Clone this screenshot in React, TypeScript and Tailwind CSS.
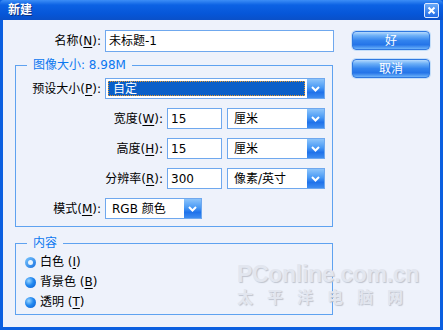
import type { ReactNode } from "react";

const FONT = "font-['DejaVu_Sans','Noto_Sans_CJK_SC',sans-serif]";

function Key({ children }: { children: ReactNode }) {
    return <span className="underline underline-offset-2">{children}</span>;
}

function Arrow() {
    return (
        <div className="flex h-full w-[17px] flex-none items-center justify-center bg-[linear-gradient(180deg,#8cc4fb_0%,#4a9af5_45%,#1f72ea_70%,#3f8df2_100%)]">
            <svg width="9" height="6" viewBox="0 0 9 6">
                <polyline points="1,1 4.5,4.5 8,1" fill="none" stroke="#fff" strokeWidth="2" />
            </svg>
        </div>
    );
}

function Select({ value, className, focused }: { value: string; className: string; focused?: boolean }) {
    return (
        <div className={`flex h-[21px] flex-none border border-[#6fa8ee] bg-white ${className}`}>
            <div className="flex min-w-0 flex-1 items-center p-[2px]">
                {focused ? (
                    <div className="flex h-full w-full items-center border border-dotted border-[#e89a2a] bg-[#0a5fc8] pl-[4px] text-white">
                        {value}
                    </div>
                ) : (
                    <span className="pl-[4px]">{value}</span>
                )}
            </div>
            <Arrow />
        </div>
    );
}

function Input({ value, className }: { value: string; className: string }) {
    return (
        <div className={`flex flex-none items-center border border-[#6fa8ee] bg-white pl-[3px] ${className}`}>
            {value}
        </div>
    );
}

function Button({ children }: { children: ReactNode }) {
    return (
        <button
            type="button"
            className="flex h-[19px] w-[78px] items-center justify-center rounded-[4px] border border-[#2f78e0] bg-[linear-gradient(180deg,#b4d9fd_0%,#6aaef7_22%,#3384ee_50%,#2474e8_75%,#6cb2f9_100%)] text-white shadow-[0_0_0_1px_#c4def9]"
        >
            {children}
        </button>
    );
}

function Radio({ checked, children }: { checked?: boolean; children: ReactNode }) {
    return (
        <div className="flex h-[20px] items-center gap-[4px]">
            {checked ? (
                <div className="flex h-[11px] w-[11px] items-center justify-center rounded-full bg-[linear-gradient(135deg,#7cc8ff,#1770e0)]">
                    <div className="h-[5px] w-[5px] rounded-full bg-[#eaf5ff]" />
                </div>
            ) : (
                <div className="h-[11px] w-[11px] rounded-full bg-[radial-gradient(circle_at_35%_35%,#9ad6ff_0%,#2288f0_45%,#0a5cd0_100%)]" />
            )}
            <span>{children}</span>
        </div>
    );
}

export default function App() {
    return (
        <div className={`flex h-[330px] w-[443px] flex-col bg-[#0a5fe0] text-[12px] leading-[14px] text-black ${FONT}`}>
            {/* title bar */}
            <div className="flex h-[20px] flex-none items-center justify-between rounded-t-[4px] bg-[linear-gradient(180deg,#3c8ef6_0%,#0c62e4_25%,#0656d8_70%,#0a50c8_100%)] pl-[8px] pr-[4px]">
                <span className="font-bold text-white [text-shadow:1px_1px_0_#0a3080]">新建</span>
                <div className="flex h-[15px] w-[15px] items-center justify-center rounded-[2px] border border-[#dfeaff] bg-[linear-gradient(180deg,#6aaaf8,#1f6ae6)]">
                    <svg width="9" height="9" viewBox="0 0 9 9">
                        <path d="M1.5 1.5 L7.5 7.5 M7.5 1.5 L1.5 7.5" stroke="#fff" strokeWidth="2" />
                    </svg>
                </div>
            </div>

            {/* body */}
            <div className="relative mx-[3px] mb-[3px] flex flex-1 gap-[18px] bg-[#eef2fb] pl-[12px] pt-[10px]">
                <div className="flex w-[319px] flex-col">
                    <div className="flex h-[22px] items-center gap-[4px]">
                        <span className="w-[86px] text-right">
                            名称(<Key>N</Key>):
                        </span>
                        <Input value="未标题-1" className="h-[22px] w-[229px]" />
                    </div>

                    <fieldset className="mt-[6px] w-[318px] border border-[#5ea2f0] pb-[7px] pt-[6px]">
                        <legend className="ml-[11px] px-[6px] text-[#0c78f0]">图像大小: 8.98M</legend>
                        <div className="flex flex-col gap-[9px]">
                            <div className="flex h-[21px] items-center gap-[4px]">
                                <span className="w-[85px] text-right">
                                    预设大小(<Key>P</Key>):
                                </span>
                                <Select value="自定" className="w-[220px]" focused />
                            </div>
                            <div className="flex h-[21px] items-center gap-[4px]">
                                <span className="w-[147px] text-right">
                                    宽度(<Key>W</Key>):
                                </span>
                                <Input value="15" className="h-[21px] w-[55px]" />
                                <Select value="厘米" className="ml-[1px] w-[98px]" />
                            </div>
                            <div className="flex h-[21px] items-center gap-[4px]">
                                <span className="w-[147px] text-right">
                                    高度(<Key>H</Key>):
                                </span>
                                <Input value="15" className="h-[21px] w-[55px]" />
                                <Select value="厘米" className="ml-[1px] w-[98px]" />
                            </div>
                            <div className="flex h-[21px] items-center gap-[4px]">
                                <span className="w-[147px] text-right">
                                    分辨率(<Key>R</Key>):
                                </span>
                                <Input value="300" className="h-[21px] w-[55px]" />
                                <Select value="像素/英寸" className="ml-[1px] w-[98px]" />
                            </div>
                            <div className="flex h-[21px] items-center gap-[4px]">
                                <span className="w-[85px] text-right">
                                    模式(<Key>M</Key>):
                                </span>
                                <Select value="RGB 颜色" className="w-[97px]" />
                            </div>
                        </div>
                    </fieldset>

                    <fieldset className="mt-[9px] w-[318px] border border-[#5ea2f0] pb-[2px] pl-[9px] pt-[2px]">
                        <legend className="ml-[2px] px-[6px] text-[#0c78f0]">内容</legend>
                        <Radio checked>
                            白色 (<Key>I</Key>)
                        </Radio>
                        <Radio>
                            背景色 (<Key>B</Key>)
                        </Radio>
                        <Radio>
                            透明 (<Key>T</Key>)
                        </Radio>
                    </fieldset>
                </div>

                <div className="flex flex-col gap-[9px] pt-[1px]">
                    <Button>好</Button>
                    <Button>取消</Button>
                </div>

                {/* watermark */}
                <div className="pointer-events-none absolute left-[234px] top-[243px] flex flex-col items-start gap-[4px] font-['Liberation_Sans','Noto_Sans_CJK_SC',sans-serif] font-bold text-[#e2e6ef] [text-shadow:1px_1px_1px_#bfc4cf]">
                    <span className="text-[23px] leading-[22px] tracking-[-0.3px]">PConline.com.cn</span>
                    <span className="text-[16px] leading-[17px] tracking-[14px]">太平洋电脑网</span>
                </div>
            </div>
        </div>
    );
}
